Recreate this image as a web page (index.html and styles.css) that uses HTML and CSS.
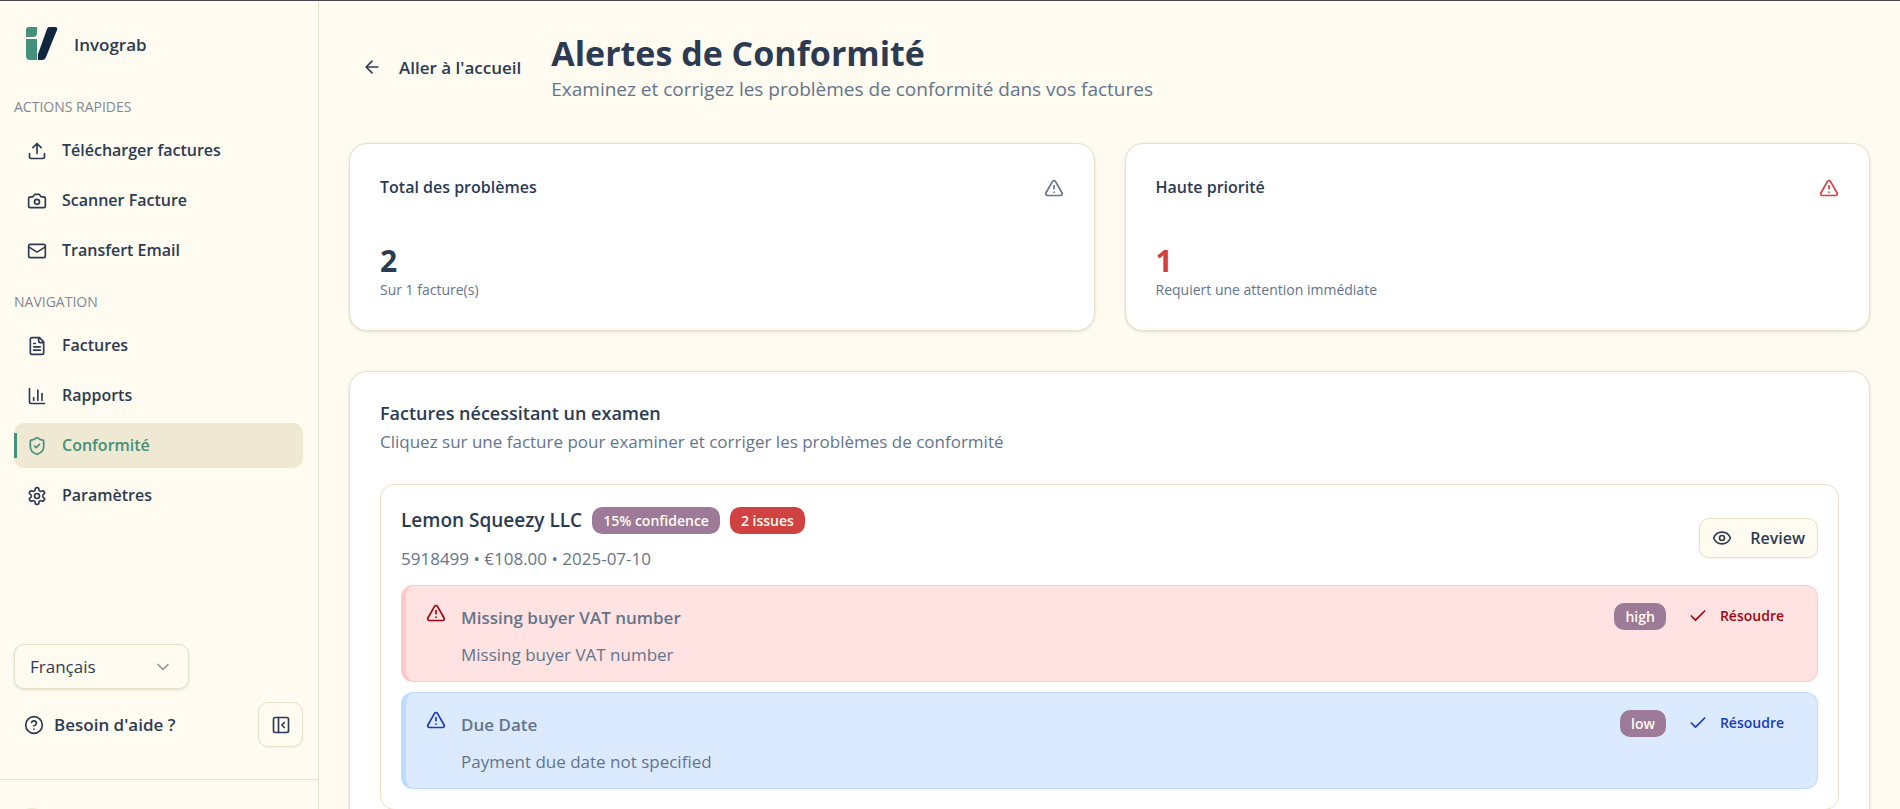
FILE: index.html
```html
<!DOCTYPE html>
<html lang="fr">

<head>
    <meta charset="UTF-8">
    <meta name="viewport" content="width=device-width, initial-scale=1.0">
    <title>Invograb - Alertes de Conformité</title>
    <link rel="stylesheet" href="styles.css">
</head>

<body>
    <!-- shared icons -->
    <svg class="sprite" aria-hidden="true">
        <symbol id="alert" viewBox="0 0 24 24">
            <path d="m21.73 18-8-14a2 2 0 0 0-3.48 0l-8 14A2 2 0 0 0 4 21h16a2 2 0 0 0 1.73-3" />
            <path d="M12 9v4M12 17h.01" />
        </symbol>
        <symbol id="check" viewBox="0 0 24 24">
            <path d="M20 6 9 17l-5-5" />
        </symbol>
    </svg>

    <div class="app">
        <aside class="sidebar">
            <div class="brand">
                <svg class="logo" viewBox="0 0 32 34">
                    <path fill="#43917a" d="M3 0h8v6q0 4-4 4H0V3q0-3 3-3z" />
                    <path fill="#43917a" d="M0 12h11v21H4q-4 0-4-4z" />
                    <path fill="#10273d" d="M23 0h6q3 0 2 3L20 30q-1 3-4 3h-4v-6L21 2q1-2 2-2z" />
                </svg>
                <span>Invograb</span>
            </div>

            <h2 class="nav-label">ACTIONS RAPIDES</h2>
            <nav class="nav">
                <a href="#"><svg class="icon" viewBox="0 0 24 24"><path d="M21 15v4a2 2 0 0 1-2 2H5a2 2 0 0 1-2-2v-4M17 8l-5-5-5 5M12 3v12" /></svg>Télécharger factures</a>
                <a href="#"><svg class="icon" viewBox="0 0 24 24"><path d="M14.5 4h-5L7 7H4a2 2 0 0 0-2 2v9a2 2 0 0 0 2 2h16a2 2 0 0 0 2-2V9a2 2 0 0 0-2-2h-3z" /><circle cx="12" cy="13" r="3" /></svg>Scanner Facture</a>
                <a href="#"><svg class="icon" viewBox="0 0 24 24"><rect x="2" y="4" width="20" height="16" rx="2" /><path d="m22 7-8.97 5.7a1.94 1.94 0 0 1-2.06 0L2 7" /></svg>Transfert Email</a>
            </nav>

            <h2 class="nav-label">NAVIGATION</h2>
            <nav class="nav">
                <a href="#"><svg class="icon" viewBox="0 0 24 24"><path d="M15 2H6a2 2 0 0 0-2 2v16a2 2 0 0 0 2 2h12a2 2 0 0 0 2-2V7zM14 2v4a2 2 0 0 0 2 2h4M10 9H8M16 13H8M16 17H8" /></svg>Factures</a>
                <a href="#"><svg class="icon" viewBox="0 0 24 24"><path d="M3 3v16a2 2 0 0 0 2 2h16M18 17V9M13 17V5M8 17v-3" /></svg>Rapports</a>
                <a href="#" class="active"><svg class="icon" viewBox="0 0 24 24"><path d="M20 13c0 5-3.5 7.5-7.66 8.95a1 1 0 0 1-.67-.01C7.5 20.5 4 18 4 13V6a1 1 0 0 1 1-1c2 0 4.5-1.2 6.24-2.72a1.17 1.17 0 0 1 1.52 0C14.51 3.81 17 5 19 5a1 1 0 0 1 1 1z" /><path d="m9 12 2 2 4-4" /></svg>Conformité</a>
                <a href="#"><svg class="icon" viewBox="0 0 24 24"><path d="M12.22 2h-.44a2 2 0 0 0-2 2v.18a2 2 0 0 1-1 1.73l-.43.25a2 2 0 0 1-2 0l-.15-.08a2 2 0 0 0-2.73.73l-.22.38a2 2 0 0 0 .73 2.73l.15.1a2 2 0 0 1 1 1.72v.51a2 2 0 0 1-1 1.74l-.15.09a2 2 0 0 0-.73 2.73l.22.38a2 2 0 0 0 2.73.73l.15-.08a2 2 0 0 1 2 0l.43.25a2 2 0 0 1 1 1.73V20a2 2 0 0 0 2 2h.44a2 2 0 0 0 2-2v-.18a2 2 0 0 1 1-1.73l.43-.25a2 2 0 0 1 2 0l.15.08a2 2 0 0 0 2.73-.73l.22-.39a2 2 0 0 0-.73-2.73l-.15-.08a2 2 0 0 1-1-1.74v-.5a2 2 0 0 1 1-1.74l.15-.09a2 2 0 0 0 .73-2.73l-.22-.38a2 2 0 0 0-2.73-.73l-.15.08a2 2 0 0 1-2 0l-.43-.25a2 2 0 0 1-1-1.73V4a2 2 0 0 0-2-2z" /><circle cx="12" cy="12" r="3" /></svg>Paramètres</a>
            </nav>

            <div class="sidebar-tools">
                <div class="language">
                    <select aria-label="Langue">
                        <option>Français</option>
                        <option>English</option>
                    </select>
                    <svg class="icon chevron" viewBox="0 0 24 24"><path d="m6 9 6 6 6-6" /></svg>
                </div>
                <div class="help-row">
                    <a href="#" class="help"><svg class="icon" viewBox="0 0 24 24"><circle cx="12" cy="12" r="10" /><path d="M9.09 9a3 3 0 0 1 5.83 1c0 2-3 3-3 3M12 17h.01" /></svg>Besoin d'aide ?</a>
                    <button class="collapse" aria-label="Réduire le menu"><svg class="icon" viewBox="0 0 24 24"><rect x="3" y="3" width="18" height="18" rx="2" /><path d="M9 3v18M16 15l-3-3 3-3" /></svg></button>
                </div>
            </div>

            <div class="user">
                <div class="avatar"></div>
            </div>
        </aside>

        <main class="main">
            <header class="page-header">
                <a href="#" class="back"><svg class="icon" viewBox="0 0 24 24"><path d="m12 19-7-7 7-7M19 12H5" /></svg>Aller à l'accueil</a>
                <div>
                    <h1>Alertes de Conformité</h1>
                    <p class="subtitle">Examinez et corrigez les problèmes de conformité dans vos factures</p>
                </div>
            </header>

            <section class="stats">
                <div class="card stat">
                    <div class="stat-head">
                        <h3>Total des problèmes</h3>
                        <svg class="icon"><use href="#alert" /></svg>
                    </div>
                    <p class="number">2</p>
                    <p class="note">Sur 1 facture(s)</p>
                </div>
                <div class="card stat urgent">
                    <div class="stat-head">
                        <h3>Haute priorité</h3>
                        <svg class="icon"><use href="#alert" /></svg>
                    </div>
                    <p class="number">1</p>
                    <p class="note">Requiert une attention immédiate</p>
                </div>
            </section>

            <section class="card review-list">
                <h2>Factures nécessitant un examen</h2>
                <p class="description">Cliquez sur une facture pour examiner et corriger les problèmes de conformité</p>

                <article class="invoice">
                    <div class="invoice-head">
                        <div>
                            <div class="invoice-title">
                                <h3>Lemon Squeezy LLC</h3>
                                <span class="badge">15% confidence</span>
                                <span class="badge badge-red">2 issues</span>
                            </div>
                            <p class="meta">5918499 • €108.00 • 2025-07-10</p>
                        </div>
                        <button class="review"><svg class="icon" viewBox="0 0 24 24"><path d="M2.06 12.35a1 1 0 0 1 0-.7 10.75 10.75 0 0 1 19.88 0 1 1 0 0 1 0 .7 10.75 10.75 0 0 1-19.88 0" /><circle cx="12" cy="12" r="3" /></svg>Review</button>
                    </div>

                    <div class="issue high">
                        <svg class="icon"><use href="#alert" /></svg>
                        <div class="issue-text">
                            <h4>Missing buyer VAT number</h4>
                            <p>Missing buyer VAT number</p>
                        </div>
                        <span class="badge">high</span>
                        <button class="resolve"><svg class="icon"><use href="#check" /></svg>Résoudre</button>
                    </div>
                    <div class="issue low">
                        <svg class="icon"><use href="#alert" /></svg>
                        <div class="issue-text">
                            <h4>Due Date</h4>
                            <p>Payment due date not specified</p>
                        </div>
                        <span class="badge">low</span>
                        <button class="resolve"><svg class="icon"><use href="#check" /></svg>Résoudre</button>
                    </div>
                </article>
            </section>
        </main>
    </div>
</body>

</html>
```

FILE: styles.css
```css
* {
    margin: 0;
    padding: 0;
    box-sizing: border-box;
}

body {
    background-color: #fffbf0;
    color: #2d3b52;
    font-family: "Segoe UI", "Open Sans", sans-serif;
    font-size: 17px;
    line-height: 25px;
}

a {
    color: inherit;
    text-decoration: none;
}

button,
select {
    font: inherit;
    color: inherit;
    cursor: pointer;
}

h1,
h2,
h3,
h4 {
    font-weight: 600;
}

.sprite {
    display: none;
}

.icon {
    width: 20px;
    height: 20px;
    flex-shrink: 0;
    fill: none;
    stroke: currentColor;
    stroke-width: 2;
    stroke-linecap: round;
    stroke-linejoin: round;
}

.app {
    display: flex;
    height: 100vh;
    overflow: hidden;
    border-top: 1px solid #49454f;
}

/* sidebar */
.sidebar {
    display: flex;
    flex-direction: column;
    width: 319px;
    flex-shrink: 0;
    border-right: 1px solid #e8e0c8;
}

.brand {
    display: flex;
    align-items: center;
    gap: 16px;
    padding: 26px 26px 20px;
    font-weight: 600;
}

.logo {
    width: 32px;
    height: 34px;
}

.nav-label {
    padding: 15px 14px 10px;
    font-size: 14px;
    font-weight: 400;
    line-height: 22px;
    color: #828894;
}

.nav {
    display: flex;
    flex-direction: column;
    gap: 5px;
    padding: 0 15px 0 14px;
}

.nav a {
    position: relative;
    display: flex;
    align-items: center;
    gap: 15px;
    height: 45px;
    padding: 0 13px;
    border-radius: 10px;
    font-size: 16px;
    font-weight: 600;
}

.nav + .nav-label {
    padding-top: 18px;
}

.nav .active {
    background-color: #efe8d2;
    color: #43917a;
}

.nav .active::before {
    content: "";
    position: absolute;
    left: 0;
    top: 10px;
    width: 3px;
    height: 25px;
    background-color: #43917a;
}

.sidebar-tools {
    margin-top: auto;
    padding: 0 15px 32px 14px;
}

.language {
    position: relative;
    width: 175px;
    margin-bottom: 13px;
}

.language select {
    display: block;
    width: 100%;
    height: 45px;
    padding: 0 15px;
    appearance: none;
    background-color: #fffbf0;
    border: 1px solid #e8e0c8;
    border-radius: 10px;
    box-shadow: 0 1px 3px rgba(0, 0, 0, 0.12);
}

.chevron {
    position: absolute;
    right: 16px;
    top: 13px;
    color: #8f939c;
    pointer-events: none;
}

.help-row {
    display: flex;
    justify-content: space-between;
    align-items: center;
}

.help {
    display: flex;
    align-items: center;
    gap: 10px;
    padding-left: 10px;
    font-weight: 600;
}

.collapse {
    display: flex;
    justify-content: center;
    align-items: center;
    width: 45px;
    height: 45px;
    background-color: #fffbf0;
    border: 1px solid #e8e0c8;
    border-radius: 10px;
    box-shadow: 0 1px 2px rgba(0, 0, 0, 0.05);
}

.user {
    height: 30px;
    padding: 28px 12px 0;
    overflow: hidden;
    border-top: 1px solid #e8e0c8;
}

.avatar {
    width: 40px;
    height: 40px;
    border-radius: 50%;
    background-color: #efe8d2;
}

/* main column */
.main {
    flex: 1;
    padding: 30px 30px 0;
}

.page-header {
    display: flex;
    align-items: center;
    gap: 30px;
    padding-left: 13px;
    margin-bottom: 40px;
}

.back {
    display: flex;
    align-items: center;
    gap: 17px;
    font-weight: 600;
}

.page-header h1 {
    font-size: 34px;
    font-weight: 700;
    line-height: 44px;
}

.subtitle {
    font-size: 19px;
    line-height: 28px;
    color: #64748b;
}

.card {
    background-color: #fff;
    border: 1px solid #e8e0c8;
    border-radius: 18px;
    box-shadow: 0 1px 3px rgba(0, 0, 0, 0.12);
}

.stats {
    display: grid;
    grid-template-columns: 1fr 1fr;
    gap: 30px;
    margin-bottom: 40px;
}

.stat {
    padding: 31px 30px 29px;
}

.stat-head {
    display: flex;
    justify-content: space-between;
    align-items: center;
    margin-bottom: 43px;
}

.stat-head h3 {
    font-size: 16px;
}

.stat-head .icon {
    color: #64748b;
}

.number {
    font-size: 30px;
    font-weight: 700;
    line-height: 36px;
}

.note {
    font-size: 14px;
    line-height: 22px;
    color: #64748b;
}

.urgent .number,
.urgent .icon {
    color: #d04242;
}

.review-list {
    padding: 26px 30px 30px;
}

.review-list h2 {
    font-size: 18px;
    line-height: 30px;
}

.description {
    line-height: 28px;
    margin-bottom: 28px;
    color: #64748b;
}

.invoice {
    display: flex;
    flex-direction: column;
    gap: 10px;
    padding: 20px;
    border: 1px solid #e8e0c8;
    border-radius: 14px;
}

.invoice-head {
    display: flex;
    justify-content: space-between;
    align-items: center;
    margin-bottom: 4px;
}

.invoice-title {
    display: flex;
    align-items: center;
    gap: 10px;
    margin-bottom: 11px;
}

.invoice-title h3 {
    font-size: 19px;
    line-height: 30px;
}

.meta {
    color: #64748b;
}

.badge {
    padding: 0 11px;
    border-radius: 10px;
    background-color: #9d7a98;
    color: #fffbf0;
    font-size: 14px;
    font-weight: 600;
    line-height: 27px;
}

.badge-red {
    background-color: #d04242;
}

.review {
    display: flex;
    align-items: center;
    gap: 18px;
    height: 40px;
    padding: 0 12px;
    background-color: #fffbf0;
    border: 1px solid #e8e0c8;
    border-radius: 10px;
    box-shadow: 0 1px 2px rgba(0, 0, 0, 0.05);
    font-size: 16px;
    font-weight: 600;
}

.issue {
    display: flex;
    align-items: flex-start;
    padding: 17px 18px 11px 20px;
    border: 1px solid;
    border-left-width: 5px;
    border-radius: 12px;
}

.issue > .icon {
    margin-right: 15px;
}

.issue-text {
    flex: 1;
    color: #64748b;
}

.issue-text h4 {
    line-height: 30px;
    margin-bottom: 7px;
}

.issue-text p {
    line-height: 30px;
}

.resolve {
    display: flex;
    align-items: center;
    gap: 12px;
    padding: 0 15px 0 22px;
    background: none;
    border: none;
    font-size: 14px;
    font-weight: 600;
}

.high {
    background-color: #ffe2e2;
    border-color: #ffc9c9;
    color: #9f0712;
}

.low {
    background-color: #dbeafe;
    border-color: #bedbff;
    color: #193cb8;
}
```
